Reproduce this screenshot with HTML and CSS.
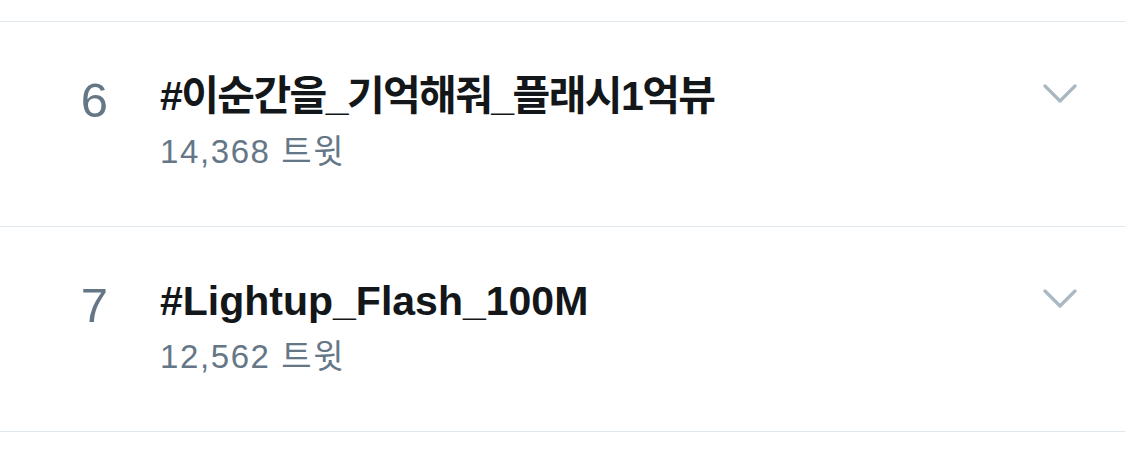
FILE: index.html
```html
<!DOCTYPE html>
<html lang="ko">
<head>
<meta charset="utf-8">
<link rel="stylesheet" href="styles.css">
</head>
<body>
<div class="list">
  <div class="row">
    <div class="rank">6</div>
    <div class="info">
      <div class="title title-ko">#이순간을_기억해줘_플래시1억뷰</div>
      <div class="count">14,368 트윗</div>
    </div>
    <svg class="chev" width="34" height="20" viewBox="0 0 34 20"><path d="M2 2 L17 17 L32 2" fill="none" stroke="#aab8c2" stroke-width="3.2" stroke-linecap="round" stroke-linejoin="round"/></svg>
  </div>
  <div class="row">
    <div class="rank">7</div>
    <div class="info">
      <div class="title">#Lightup_Flash_100M</div>
      <div class="count">12,562 트윗</div>
    </div>
    <svg class="chev" width="34" height="20" viewBox="0 0 34 20"><path d="M2 2 L17 17 L32 2" fill="none" stroke="#aab8c2" stroke-width="3.2" stroke-linecap="round" stroke-linejoin="round"/></svg>
  </div>
</div>
</body>
</html>
```
FILE: styles.css
```css
html, body {
  margin: 0;
  padding: 0;
  background: #ffffff;
}
body {
  font-family: "Liberation Sans", "Noto Sans CJK KR", sans-serif;
  width: 1125px;
  height: 467px;
  overflow: hidden;
}
.list {
  padding-top: 21px;
}
.row {
  display: flex;
  align-items: flex-start;
  height: 204px;
  border-top: 1px solid #e1e8ed;
}
.row:last-child {
  border-bottom: 1px solid #e1e8ed;
}
.rank {
  width: 160px;
  box-sizing: border-box;
  padding-right: 52px;
  text-align: right;
  margin-top: 53px;
  font-size: 49px;
  line-height: 50px;
  color: #657786;
}
.info {
  flex: 1;
  display: flex;
  flex-direction: column;
  gap: 10px;
  padding-top: 48px;
}
.title {
  font-size: 41px;
  line-height: 52px;
  font-weight: bold;
  color: #14171a;
}
.title-ko {
  letter-spacing: -1.6px;
}
.count {
  font-size: 33px;
  line-height: 40px;
  letter-spacing: 1.6px;
  color: #657786;
}
.chev {
  margin-right: 48px;
  margin-top: 62px;
}
```
